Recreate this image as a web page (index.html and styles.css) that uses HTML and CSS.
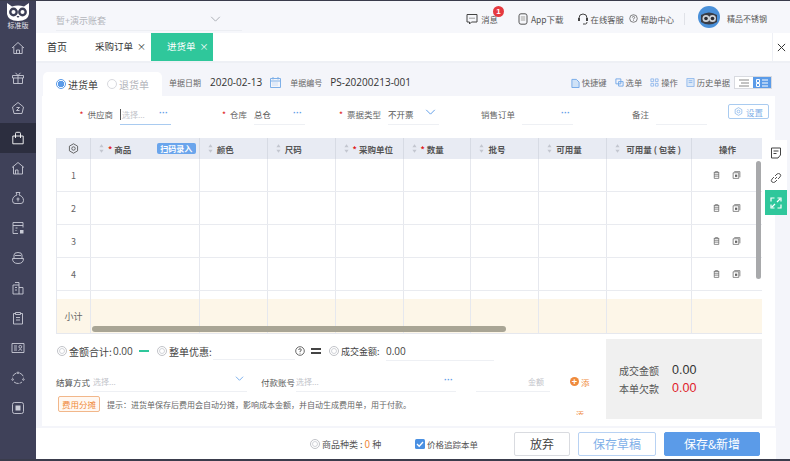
FILE: index.html
```html
<!DOCTYPE html>
<html lang="en">
<head>
    <meta charset="UTF-8">
    <title>进货单</title>
    <link rel="stylesheet" href="styles.css">
</head>
<body>
    <svg class="defs" width="0" height="0">
        <symbol id="i-trash" viewBox="0 0 12 12"><path d="M4.500 2.500V1.500h3v1M2.500 2.500h7M3 2.500v8h6v-8M3 5h6M3 7.500h6" fill="none" stroke="currentColor"/></symbol>
        <symbol id="i-copy" viewBox="0 0 12 12"><path d="M3 1.500h7.500V9M1.500 3h7.500v7.500H1.500z" fill="none" stroke="currentColor"/><rect x="4" y="5.500" width="3" height="3" fill="currentColor"/></symbol>
        <symbol id="i-sort" viewBox="0 0 6 10"><path d="M3 0l2.500 3.500h-5zM3 10L.5 6.500h5z" fill="#c3c6cf"/></symbol>
        <symbol id="i-gear" viewBox="0 0 14 14"><path d="M7 1l5.200 3v6L7 13l-5.200-3V4z" fill="none" stroke="currentColor" stroke-width="1.100"/><circle cx="7" cy="7" r="2.200" fill="none" stroke="currentColor" stroke-width="1.100"/></symbol>
        <symbol id="i-chev" viewBox="0 0 12 7"><path d="M1 1l5 5 5-5" fill="none" stroke="currentColor" stroke-width="1.100"/></symbol>
        <symbol id="i-coin" viewBox="0 0 12 12"><circle cx="6" cy="6" r="5.400" fill="none" stroke="#b4b7bd"/><circle cx="6" cy="6" r="3" fill="none" stroke="#c8cad0"/></symbol>
    </svg>

    <aside class="sidebar">
        <svg class="logo" viewBox="0 0 24 18" width="24" height="18">
            <path d="M1 0l5 3.500q6-2 12 0L23 0v11q-1 7-11 7T1 11z" fill="#fff"/>
            <circle cx="7.500" cy="9" r="4.400" fill="#3c3f56"/><circle cx="16.500" cy="9" r="4.400" fill="#3c3f56"/>
            <circle cx="7.500" cy="9" r="2" fill="#fff"/><circle cx="16.500" cy="9" r="2" fill="#fff"/>
            <path d="M10.500 13l1.500 2 1.500-2z" fill="#3c3f56"/>
        </svg>
        <span class="edition">标准版</span>
        <nav class="side-nav">
            <a class="side-item"><svg viewBox="0 0 14 14"><path d="M1 7l6-5.500L13 7M2.800 6v6.500h8.400V6M5.500 12.500V9h3v3.500"/></svg></a>
            <a class="side-item"><svg viewBox="0 0 14 14"><path d="M1.500 4.500h11v2.500h-11zM2.500 7v5.500h9V7M7 4.500v8M7 4.500L4.500 1.800M7 4.500l2.500-2.700"/></svg></a>
            <a class="side-item"><svg viewBox="0 0 14 14"><path d="M7 1.500l5.500 4.500-1.500 6.500H3L1.500 6zM5.500 6.500h3l-3 3h3"/></svg></a>
            <a class="side-item active"><svg viewBox="0 0 14 14"><path d="M1.800 5h10.400v7.800H1.800zM4.500 7V2.500q0-1.200 1.200-1.200h2.600q1.200 0 1.200 1.200V7"/></svg></a>
            <a class="side-item"><svg viewBox="0 0 14 14"><path d="M1 6.500L7 1.500l6 5M2.500 5.500v7.500h9V5.500M4.500 13V9h2.500v4"/></svg></a>
            <a class="side-item"><svg viewBox="0 0 14 14"><path d="M5 1.500h4L8 4q4.500 1.500 4.500 5.500 0 3-2.500 3H4q-2.500 0-2.500-3Q1.500 5.500 6 4zM5.500 8h3M7 6.500V10.500"/></svg></a>
            <a class="side-item"><svg viewBox="0 0 14 14"><path d="M12 6.500V1.500H2v11h5M2 4.500h10M4.500 7h2M4.500 9.500h1"/><rect x="9" y="9" width="3.500" height="3.500" fill="#c9cbd6" stroke="none"/></svg></a>
            <a class="side-item"><svg viewBox="0 0 14 14"><path d="M1.500 7.500h11q0 5-5.500 5t-5.500-5zM3 7.500V4q0-2.500 4-2.500T11 4v3.500M4 4.500h6"/></svg></a>
            <a class="side-item"><svg viewBox="0 0 14 14"><path d="M2 4h6v9H2zM8 6.500h4V13H8M4 1.500h4V4M4 6.500h2M4 9h2"/></svg></a>
            <a class="side-item"><svg viewBox="0 0 14 14"><path d="M4.500 2.500h-2v10.500h9V2.500h-2M4.500 1.500h5v2h-5zM5 6.500h4M5 9h4"/></svg></a>
            <a class="side-item"><svg viewBox="0 0 14 14"><path d="M1 2.500h12v9H1zM3 5h3M3 7h3M3 9h3"/><circle cx="9.300" cy="5.800" r="1.400"/><path d="M7.500 9.500q1.800-2.600 3.600 0"/></svg></a>
            <a class="side-item"><svg viewBox="0 0 14 14"><path d="M5.500 2q-3.500 1.200-4 4.500M8.500 2q3.500 1.200 4 4.500M3 11q4 3 8 0" stroke-dasharray="5 1"/><circle cx="7" cy="1.800" r=".8"/><circle cx="1.600" cy="8.500" r=".8"/><circle cx="12.400" cy="8.500" r=".8"/></svg></a>
            <a class="side-item"><svg viewBox="0 0 14 14"><rect x="1.500" y="1.500" width="11" height="11" rx="2"/><rect x="4.500" y="4.500" width="5" height="5" fill="#c9cbd6" stroke="none"/></svg></a>
        </nav>
    </aside>

    <div class="page">
        <header class="topbar">
            <div class="account"><span>暂+演示账套</span><svg class="account-chev" width="11" height="6"><use href="#i-chev"/></svg></div>
            <div class="top-links">
                <span class="top-link msg">
                    <svg viewBox="0 0 12 12" width="12" height="12"><path d="M1 1.500h10v7.500H5.500L3.500 11V9H1z" fill="none" stroke="#444"/><path d="M3.500 5.200h1M5.500 5.200h1M7.500 5.200h1" stroke="#444"/></svg>
                    消息<b class="badge">1</b>
                </span>
                <span class="top-link app">
                    <svg viewBox="0 0 10 12" width="10" height="12"><rect x="1" y=".8" width="8" height="10.400" rx="2" fill="none" stroke="#555"/><rect x="2.800" y="3" width="4.400" height="5" fill="#ccc"/></svg>
                    App下载
                </span>
                <span class="top-link service">
                    <svg viewBox="0 0 12 12" width="12" height="12"><path d="M2 7V5q0-4 4-4t4 4v2M6 11h2.500q1.500 0 1.500-2" fill="none" stroke="#444"/><rect x="1" y="5" width="2" height="3" fill="#444"/><rect x="9" y="5" width="2" height="3" fill="#444"/></svg>
                    在线客服
                </span>
                <span class="top-link help">
                    <svg viewBox="0 0 10 10" width="9" height="9"><circle cx="5" cy="5" r="4.200" fill="none" stroke="#555" stroke-width=".8"/><path d="M3.700 4q0-1.300 1.300-1.300T6.300 4Q6.300 5 5 5.300v.7M5 6.800v.8" fill="none" stroke="#555" stroke-width=".8"/></svg>
                    帮助中心
                </span>
                <span class="top-sep"></span>
                <svg class="avatar" viewBox="0 0 22 22" width="22" height="22">
                    <circle cx="11" cy="11" r="11" fill="#4a90d9"/>
                    <path d="M3 9q8-5 16 0v7q-8 5-16 0z" fill="#3a3d46"/>
                    <circle cx="8" cy="12.500" r="3.500" fill="#cfd3d8"/><circle cx="14.500" cy="12.500" r="3.500" fill="#cfd3d8"/>
                    <circle cx="8" cy="12.500" r="1.800" fill="#2c2e35"/><circle cx="14.500" cy="12.500" r="1.800" fill="#2c2e35"/>
                </svg>
                <span class="user-name">精品不锈钢</span>
            </div>
        </header>

        <div class="tabs">
            <span class="tab home">首页</span>
            <span class="tab orders">采购订单<i>×</i></span>
            <span class="tab current">进货单<i>×</i></span>
            <span class="tabs-close">
                <svg viewBox="0 0 10 10" width="9" height="9"><path d="M1 1l8 8M9 1L1 9" stroke="#333" stroke-width="1.100"/></svg>
            </span>
        </div>

        <main class="content">
            <div class="doc-head">
                <div class="doc-type">
                    <span class="radio on"></span><span class="radio-label on">进货单</span>
                    <span class="radio"></span><span class="radio-label">退货单</span>
                </div>
                <span class="doc-label date-label">单据日期</span>
                <span class="doc-value">2020-02-13</span>
                <svg class="calendar" viewBox="0 0 11 11" width="11" height="11"><path d="M.5 1.500h10v9H.5zM.5 4h10M3 0v2.500M8 0v2.500" fill="none" stroke="#7fb0e8"/><path d="M2.500 6h6M2.500 8h6" stroke="#a9cbf0" stroke-dasharray="1 1"/></svg>
                <span class="doc-label no-label">单据编号</span>
                <span class="doc-value">PS-20200213-001</span>
                <div class="doc-tools">
                    <span class="tool"><svg viewBox="0 0 10 11" width="9" height="10"><path d="M1 1.500h5l3 3v6H1z" fill="#cfe2f7" stroke="#6fa6e6"/></svg>快捷键</span>
                    <span class="tool"><svg viewBox="0 0 10 10" width="9" height="9"><path d="M1 1h5.500v5.500H1zM4 4h5v5H4z" fill="none" stroke="#6fa6e6"/></svg>选单</span>
                    <span class="tool"><svg viewBox="0 0 10 10" width="9" height="9"><path d="M1 1h3v3H1zM6 1h3v3H6zM1 6h3v3H1zM6 6h3v3H6z" fill="none" stroke="#8fb8ec"/></svg>操作</span>
                    <span class="tool"><svg viewBox="0 0 10 10" width="9" height="9"><path d="M1 .5h8v9H1zM3 3h4M3 5h4" fill="#dbe8f8" stroke="#8fb8ec"/></svg>历史单据</span>
                    <span class="view-toggle">
                        <span class="view-btn"><svg viewBox="0 0 10 8" width="10" height="8"><path d="M0 1h10M2 4h8M0 7h10" stroke="#888"/></svg></span>
                        <span class="view-btn on"><svg viewBox="0 0 12 8" width="12" height="8"><path d="M.5.500h3v3h-3zM.5 4.500h3v3h-3zM6 1h6M6 4h6M6 7h6" fill="none" stroke="#fff"/></svg></span>
                    </span>
                </div>
            </div>

            <section class="card">
                <div class="form-row">
                    <div class="field"><label><em>*</em>供应商</label><span class="input first"><span class="caret"></span><span class="ph">选择...</span><span class="dots">···</span></span></div>
                    <div class="field"><label><em>*</em>仓库</label><span class="input"><span class="val">总仓</span><span class="dots">···</span></span></div>
                    <div class="field"><label><em>*</em>票据类型</label><span class="input"><span class="val">不开票</span><svg class="field-chev" width="11" height="6"><use href="#i-chev"/></svg></span></div>
                    <div class="field"><label>销售订单</label><span class="input"><span class="dots">···</span></span></div>
                    <div class="field"><label>备注</label><span class="input"></span></div>
                    <button class="settings"><svg width="9" height="9"><use href="#i-gear"/></svg>设置</button>
                </div>

                <div class="grid-wrap">
                    <div class="grid" id="grid"></div>
                    <div class="scroll-v"></div>
                    <div class="scroll-h"></div>
                </div>

                <div class="summary">
                    <div class="summary-main">
                        <div class="totals">
                            <svg width="10" height="10"><use href="#i-coin"/></svg>
                            <span class="tot-label sum">金额合计:</span><span class="tot-num">0.00</span>
                            <span class="minus"></span>
                            <svg width="10" height="10"><use href="#i-coin"/></svg>
                            <span class="tot-label off">整单优惠:</span><span class="discount"></span>
                            <svg class="qmark" viewBox="0 0 10 10" width="10" height="10"><circle cx="5" cy="5" r="4.300" fill="none" stroke="#444" stroke-width=".8"/><path d="M3.700 4q0-1.300 1.300-1.300T6.300 4Q6.300 5 5 5.300v.7M5 6.800v.8" fill="none" stroke="#444" stroke-width=".8"/></svg>
                            <span class="equals"></span>
                            <svg width="10" height="10"><use href="#i-coin"/></svg>
                            <span class="tot-label small">成交金额:</span><span class="deal">0.00</span>
                        </div>
                        <div class="pay-row">
                            <label>结算方式</label>
                            <span class="pay-input wide"><span class="ph">选择...</span><svg class="pay-chev" width="9" height="5"><use href="#i-chev"/></svg></span>
                            <label class="pay-no">付款账号</label>
                            <span class="pay-input account-no"><span class="ph">选择...</span><span class="dots">···</span></span>
                            <span class="pay-input amount"><span class="ph">金额</span></span>
                            <span class="add"><b>+</b>添</span>
                        </div>
                        <div class="hint-row">
                            <button class="fee">费用分摊</button>
                            <span class="hint">提示：进货单保存后费用会自动分摊，影响成本金额，并自动生成费用单，用于付款。</span>
                        </div>
                        <span class="cut-off">添</span>
                    </div>
                    <div class="deal-box">
                        <div class="deal-line"><span>成交金额</span><b>0.00</b></div>
                        <div class="deal-line"><span>本单欠款</span><b class="owed">0.00</b></div>
                    </div>
                </div>
            </section>

            <div class="side-tabs">
                <span class="side-tab"><svg viewBox="0 0 12 12" width="12" height="12"><path d="M1.500 1h9v7L8 11H1.500zM3.500 4h5M3.500 6.500h3" fill="none" stroke="#444"/></svg></span>
                <span class="side-tab"><svg viewBox="0 0 12 12" width="12" height="12"><path d="M5 7l2-2M4 5L2 7q-1.500 2 0 3t3 0l2-2M8 7l2-2q1.500-2 0-3T7 2L5 4" fill="none" stroke="#555"/></svg></span>
                <span class="side-tab green"><svg viewBox="0 0 12 12" width="12" height="12"><path d="M1 4.500V1h3.500M11 7.500V11H7.500M7.500 1H11v3.500M4.500 11H1V7.500M7 5l3-3M5 7l-3 3" fill="none" stroke="#fff" stroke-width="1.200"/></svg></span>
            </div>
        </main>

        <footer class="footer">
            <svg width="10" height="10"><use href="#i-coin"/></svg>
            <span class="kinds">商品种类 : <em>0</em> 种</span>
            <span class="check"><svg viewBox="0 0 10 10" width="10" height="10"><rect width="10" height="10" rx="1.500" fill="#4a90e2"/><path d="M2 5l2.200 2.200L8 3" fill="none" stroke="#fff" stroke-width="1.300"/></svg>价格追踪本单</span>
            <button class="btn">放弃</button>
            <button class="btn draft">保存草稿</button>
            <button class="btn primary">保存&amp;新增</button>
        </footer>
    </div>

    <script>
        const columns = [
            { title: '', cls: 'c-index' },
            { title: '商品', cls: 'c-goods', required: true, sort: true },
            { title: '颜色', cls: 'c-mid', sort: true },
            { title: '尺码', cls: 'c-mid', sort: true },
            { title: '采购单位', cls: 'c-mid', required: true, sort: true },
            { title: '数量', cls: 'c-mid', required: true, sort: true },
            { title: '批号', cls: 'c-mid', sort: true },
            { title: '可用量', cls: 'c-mid', sort: true },
            { title: '可用量 ( 包装 )', cls: 'c-pack', sort: true },
            { title: '操作', cls: 'c-ops' }
        ];

        const gridEl = document.getElementById('grid');

        function addRow(rowClass, cellFn) {
            const row = document.createElement('div');
            row.className = 'grid-row ' + rowClass;
            columns.forEach((col, i) => {
                const cell = document.createElement('div');
                cell.className = 'cell ' + col.cls;
                cell.innerHTML = cellFn(col, i);
                row.appendChild(cell);
            });
            gridEl.appendChild(row);
        }

        addRow('head', (col, i) => {
            if (i === 0) return '<svg class="head-gear" width="11" height="11"><use href="#i-gear"/></svg>';
            let html = '';
            if (col.sort) html += '<svg class="sort" width="5" height="9"><use href="#i-sort"/></svg>';
            if (col.required) html += '<em>*</em>';
            html += col.title;
            if (i === 1) html += '<span class="scan">扫码录入</span>';
            return html;
        });

        ['1', '2', '3', '4'].forEach(n => {
            addRow('body', (col, i) => {
                if (i === 0) return n;
                if (i === 9) return '<svg width="9" height="10"><use href="#i-trash"/></svg><svg width="9" height="10"><use href="#i-copy"/></svg>';
                return '';
            });
        });

        addRow('blank', () => '');
        addRow('total', (col, i) => (i === 0 ? '小计' : ''));
    </script>
</body>
</html>
```

FILE: styles.css
```css
* {
    box-sizing: border-box;
}

.defs {
    position: absolute;
}

body {
    margin: 0;
    width: 790px;
    height: 461px;
    overflow: hidden;
    display: flex;
    font-family: "Noto Sans CJK SC", "Noto Sans", sans-serif;
    font-size: 9px;
    color: #555;
    background-color: #f4f5fa;
    border-top: 1px solid #3a3c4c;
    border-bottom: 2px solid #3a3c4c;
}

em {
    font-style: normal;
    color: #e02020;
}

button {
    font-family: inherit;
    cursor: pointer;
}

.sidebar {
    width: 36px;
    flex-shrink: 0;
    background-color: #3f4159;
    display: flex;
    flex-direction: column;
    align-items: center;
}

.logo {
    margin-top: 2px;
    flex-shrink: 0;
}

.edition {
    height: 9px;
    font-size: 7px;
    line-height: 9px;
    color: #e6e7ee;
    white-space: nowrap;
}

.side-nav {
    margin-top: 3px;
    width: 100%;
}

.side-item {
    height: 30px;
    display: flex;
    align-items: center;
    justify-content: center;
}

.side-item.active {
    background-color: #2c2e3f;
}

.side-item svg {
    width: 14px;
    height: 14px;
    fill: none;
    stroke: #c9cbd6;
    stroke-width: 0.9;
}

.side-item.active svg {
    stroke: #fff;
}

.page {
    flex: 1;
    display: flex;
    flex-direction: column;
    min-width: 0;
}

.topbar {
    height: 32px;
    display: flex;
    align-items: center;
    background-color: #f6f7fb;
}

.account {
    width: 186px;
    height: 28px;
    margin-left: 20px;
    padding-top: 11px;
    display: flex;
    color: #b4b6bc;
    border-bottom: 1px solid #eceef3;
}

.account-chev {
    margin: 2px 0 0 104px;
    color: #a9abb3;
}

.top-links {
    margin-left: auto;
    display: flex;
    align-items: center;
    color: #555;
    padding: 3px 23px 0 0;
    font-size: 8.3px;
}

.top-link {
    display: flex;
    align-items: center;
    gap: 3px;
    white-space: nowrap;
    position: relative;
}

.top-link.app {
    margin-left: 17px;
    font-size: 8.5px;
}

.top-link.service {
    margin-left: 13px;
    gap: 2px;
}

.top-link.help {
    margin-left: 5px;
}

.badge {
    position: absolute;
    top: -7px;
    right: -3px;
    width: 11px;
    height: 11px;
    border-radius: 50%;
    background-color: #e5393f;
    color: #fff;
    font: bold 8px/11px "Liberation Sans", sans-serif;
    text-align: center;
}

.top-sep {
    width: 1px;
    height: 12px;
    margin: 0 13px 0 10px;
    background-color: #e0e2e8;
}

.avatar {
    margin-top: -3px;
}

.user-name {
    margin-left: 7px;
    font-size: 8px;
}

.tabs {
    height: 30px;
    display: flex;
    background-color: #fff;
    font-size: 9.5px;
    color: #333;
    position: relative;
    border-bottom: 2px solid #eef0f5;
}

.tab {
    height: 28px;
    line-height: 27px;
    white-space: nowrap;
}

.tab.home {
    margin-left: 11px;
    width: 48px;
    font-size: 10px;
}

.tab.orders {
    width: 56px;
}

.tab i {
    font-style: normal;
    margin-left: 4px;
    font-size: 9px;
}

.tab.current {
    width: 62px;
    padding-left: 16px;
    background-color: #2fc79b;
    color: #fff;
}

.tabs-close {
    position: absolute;
    right: 0;
    top: 0;
    width: 18px;
    height: 28px;
    display: flex;
    align-items: center;
    justify-content: center;
    border-left: 1px solid #eef0f5;
}

.content {
    flex: 1;
    position: relative;
    padding: 0 15px 2px 6px;
    display: flex;
    flex-direction: column;
    min-height: 0;
}

.doc-head {
    height: 33px;
    display: flex;
    align-items: flex-end;
    padding-bottom: 7px;
    color: #333;
}

.doc-type {
    width: 119px;
    height: 24px;
    margin: 0 7px -7px 1px;
    padding: 5px 0 0 13px;
    display: flex;
    align-items: flex-start;
    background-color: #fff;
    border-radius: 5px 5px 0 0;
}

.radio {
    width: 10px;
    height: 10px;
    margin-top: 2px;
    border-radius: 50%;
    border: 1px solid #d8d9de;
    flex-shrink: 0;
}

.radio.on {
    border-color: #5b9be8;
    background: radial-gradient(circle, #5b9be8 0 3px, #fff 3.500px);
}

.radio-label {
    margin: 0 9px 0 2px;
    font-size: 10px;
    color: #b4b6bc;
}

.radio-label.on {
    color: #444;
}

.doc-label {
    color: #666;
    font-size: 8px;
    line-height: 13px;
}

.date-label {
    width: 41px;
}

.doc-value {
    font-size: 10px;
    line-height: 13px;
    color: #333;
    white-space: nowrap;
    font-family: "Open Sans", sans-serif;
}

.calendar {
    margin: 0 9px 1px 8px;
}

.no-label {
    width: 40px;
}

.doc-tools {
    margin-left: auto;
    display: flex;
    align-items: center;
    margin-right: 3px;
    color: #666;
    font-size: 8.3px;
    line-height: 13px;
}

.tool {
    display: flex;
    align-items: center;
    gap: 2px;
    margin-right: 8px;
    white-space: nowrap;
}

.tool:nth-child(4) {
    margin-right: 4px;
}

.view-toggle {
    display: flex;
    height: 13px;
    border: 1px solid #d8dae0;
    background-color: #fff;
}

.view-btn {
    width: 18px;
    display: flex;
    align-items: center;
    justify-content: center;
}

.view-btn.on {
    background-color: #5b9be8;
}

.card {
    flex: 1;
    display: flex;
    flex-direction: column;
    width: 733px;
    background-color: #fff;
    min-height: 0;
}

.form-row {
    height: 42px;
    padding: 8px 0 0 27px;
    display: flex;
    align-items: flex-start;
    position: relative;
}

.field {
    width: 134px;
    display: flex;
    align-items: flex-start;
    gap: 7px;
}

.field label {
    width: 44px;
    text-align: right;
    line-height: 20px;
    font-size: 8.5px;
    white-space: nowrap;
    color: #666;
}

.field em {
    margin-right: 4px;
}

.input {
    width: 51px;
    height: 21px;
    display: flex;
    align-items: center;
    position: relative;
    border-bottom: 1px solid #eef0f4;
    font-size: 8.5px;
}

.input.first {
    border-bottom-color: #a9cbf0;
}

.caret {
    width: 1px;
    height: 11px;
    margin-right: 1px;
    background-color: #555;
}

.ph {
    color: #c2c4ca;
    font-size: 8px;
}

.val {
    color: #555;
}

.dots {
    position: absolute;
    right: 3px;
    top: 3px;
    color: #5b9be8;
    font: bold 9px/12px "Liberation Sans", sans-serif;
}

.field-chev {
    position: absolute;
    right: 3px;
    top: 5px;
    color: #5b9be8;
}

.settings {
    position: absolute;
    left: 686px;
    top: 8px;
    width: 41px;
    height: 15px;
    padding: 0;
    display: flex;
    align-items: center;
    justify-content: center;
    gap: 3px;
    font-size: 8.5px;
    color: #7fb0e8;
    background-color: #fff;
    border: 1px solid #a9cbf0;
    border-radius: 2px;
}

.grid-wrap {
    margin-left: 14px;
    width: 706px;
    position: relative;
    flex-shrink: 0;
}

.grid {
    display: flex;
    flex-direction: column;
    border-left: 1px solid #e6e8ee;
    border-bottom: 1px solid #e6e8ee;
}

.grid-row {
    display: flex;
    border-bottom: 1px solid #e9ebf0;
}

.grid-row.head {
    height: 21px;
    background-color: #e8ebf3;
    font-size: 8.5px;
    font-weight: bold;
    color: #555;
    border-bottom: 0;
}

.grid-row.body {
    height: 33px;
}

.grid-row.blank {
    height: 8px;
    border-bottom: 0;
}

.grid-row.total {
    height: 34px;
    background-color: #fdf6e8;
    border-bottom: 0;
}

.cell {
    display: flex;
    align-items: center;
    position: relative;
    border-right: 1px solid #e6e8ee;
    white-space: pre;
    padding-left: 8px;
}

.grid-row.head .cell {
    border-right-color: #d7dbe4;
}

.c-index {
    width: 34px;
    justify-content: center;
    padding-left: 0;
    color: #666;
    font-size: 9px;
}

.c-goods {
    width: 109px;
}

.c-mid {
    width: 68px;
}

.c-pack {
    width: 85px;
}

.c-ops {
    width: 70px;
    padding-left: 20px;
    gap: 11px;
    border-right: 0;
    color: #666;
}

.head .c-ops {
    padding-left: 27px;
    color: #555;
}

.head-gear {
    color: #555;
}

.sort {
    margin-right: 4px;
}

.head .c-pack .sort {
    margin-right: 6px;
}

.head em {
    margin-right: 2px;
}

.scan {
    position: absolute;
    right: 3px;
    top: 5px;
    width: 39px;
    height: 11px;
    line-height: 11px;
    font-size: 8px;
    text-align: center;
    color: #fff;
    background-color: #6aa5ec;
    border-radius: 2px;
}

.scroll-v {
    position: absolute;
    left: 700px;
    top: 23px;
    width: 5px;
    height: 118px;
    border-radius: 3px;
    background-color: #a8a9ab;
}

.scroll-h {
    position: absolute;
    left: 36px;
    top: 188px;
    width: 414px;
    height: 6px;
    border-radius: 3px;
    background-color: #a9a595;
}

.summary {
    flex: 1;
    display: flex;
    padding: 5px 0 7px 14px;
    min-height: 0;
}

.summary-main {
    width: 550px;
    position: relative;
}

.totals {
    display: flex;
    align-items: center;
    height: 18px;
    margin: 3px 0 0 1px;
    font-size: 10px;
    color: #444;
}

.tot-label {
    margin-left: 2px;
    white-space: pre;
}

.tot-label.sum {
    width: 44px;
}

.tot-label.off {
    width: 44px;
}

.tot-label.small {
    font-size: 9px;
    width: 45px;
}

.tot-num {
    width: 19px;
    font-family: "Open Sans", sans-serif;
}

.minus {
    width: 10px;
    height: 2px;
    margin: 0 8px 0 7px;
    background-color: #2fc79b;
}

.discount {
    width: 82px;
    height: 18px;
    border-bottom: 1px solid #eef0f4;
}

.equals {
    width: 10px;
    height: 6px;
    margin: 0 8px 0 6px;
    border-top: 2px solid #444;
    border-bottom: 2px solid #444;
}

.deal {
    font-family: "Open Sans", sans-serif;
    width: 108px;
    line-height: 18px;
    border-bottom: 1px solid #eef0f4;
}

.pay-row {
    display: flex;
    align-items: center;
    height: 23px;
    margin-top: 10px;
    font-size: 8.5px;
    color: #555;
}

.pay-row label {
    width: 37px;
    white-space: nowrap;
}

.pay-input {
    height: 21px;
    display: flex;
    align-items: center;
    position: relative;
    border-bottom: 1px solid #eef0f4;
}

.pay-input.wide {
    width: 154px;
}

.pay-chev {
    position: absolute;
    right: 3px;
    top: 5px;
    color: #5b9be8;
}

.pay-row .pay-no {
    margin-left: 14px;
    width: 35px;
}

.pay-input.account-no {
    width: 160px;
}

.pay-input.amount {
    width: 74px;
    margin-left: 20px;
    justify-content: flex-end;
    padding-right: 6px;
}

.add {
    margin-left: 20px;
    display: flex;
    align-items: center;
    gap: 2px;
    color: #ef8a3c;
}

.add b {
    width: 9px;
    height: 9px;
    line-height: 9px;
    text-align: center;
    border-radius: 50%;
    color: #fff;
    font-size: 9px;
    background-color: #ef8a3c;
}

.hint-row {
    display: flex;
    align-items: center;
    gap: 7px;
    margin-top: 3px;
    margin-left: 2px;
}

.fee {
    width: 42px;
    height: 16px;
    padding: 0;
    font-size: 8.5px;
    color: #ef8a3c;
    background-color: #fff8f2;
    border: 1px solid #f2b78a;
    border-radius: 2px;
}

.hint {
    font-size: 8px;
    color: #666;
    white-space: nowrap;
}

.cut-off {
    position: absolute;
    left: 520px;
    top: 72px;
    height: 4px;
    overflow: hidden;
    color: #ef8a3c;
    font-size: 8px;
    line-height: 8px;
}

.deal-box {
    width: 156px;
    padding: 22px 0 0 13px;
    background-color: #f0f0f0;
}

.deal-line {
    display: flex;
    align-items: center;
    height: 18px;
    font-size: 10px;
    color: #555;
}

.deal-line b {
    margin-left: 13px;
    font: 12.5px "Liberation Sans", sans-serif;
    color: #333;
}

.deal-line b.owed {
    color: #e0202a;
}

.side-tabs {
    position: absolute;
    left: 729px;
    top: 77px;
    width: 22px;
    display: flex;
    flex-direction: column;
    background-color: #fff;
}

.side-tab {
    height: 25px;
    display: flex;
    align-items: center;
    justify-content: center;
}

.side-tab.green {
    background-color: #2fc79b;
}

.footer {
    height: 31px;
    width: 740px;
    flex-shrink: 0;
    display: flex;
    align-items: center;
    padding-left: 274px;
    background-color: #fff;
    color: #555;
}

.kinds {
    margin-left: 2px;
    font-size: 9px;
    white-space: pre;
    width: 93px;
}

.kinds em {
    font-size: 10px;
    color: #ef8a3c;
}

.check {
    display: flex;
    align-items: center;
    gap: 2px;
    width: 99px;
    font-size: 8.5px;
    white-space: nowrap;
}

.btn {
    width: 56px;
    height: 24px;
    padding: 0;
    margin-right: 8px;
    font-size: 12px;
    color: #444;
    background-color: #fff;
    border: 1px solid #d9dbe0;
    border-radius: 2px;
}

.btn.draft {
    width: 78px;
    color: #7fb0e8;
    border-color: #b8d2f3;
}

.btn.primary {
    width: 96px;
    color: #fff;
    background-color: #5b9be8;
    border-color: #5b9be8;
}
```
